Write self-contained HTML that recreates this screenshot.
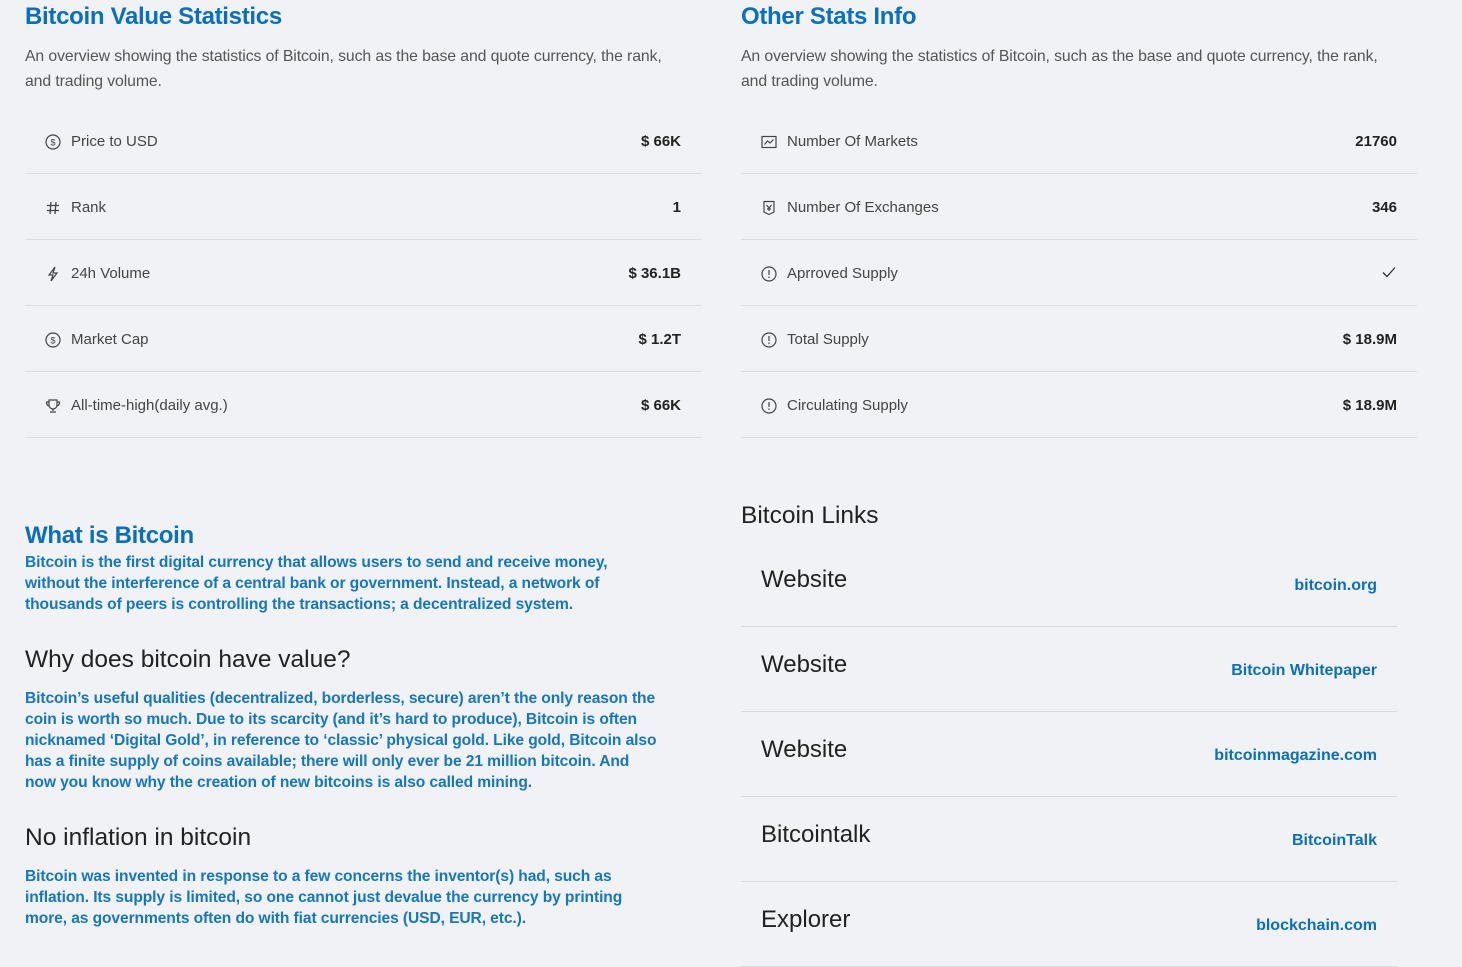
<!DOCTYPE html>
<html><head><meta charset="utf-8"><style>
*{margin:0;padding:0;box-sizing:border-box}
body{width:1462px;height:935px;overflow:hidden;background:#f0f2f5;font-family:"Liberation Sans",sans-serif;color:#333;position:relative}
.abs{position:absolute;white-space:nowrap}
h2{font-size:24px;font-weight:bold;color:#0a6fc2;letter-spacing:-0.3px}
.desc{font-size:15.8px;line-height:25px;color:#555;letter-spacing:-0.1px}
.stats{position:absolute;width:676px}
.row{height:66px;border-bottom:1px solid #dcdde0;display:flex;align-items:center;padding:0 20px;font-size:15px;color:#444;padding-top:2px}
.row svg{width:16px;height:16px;margin-right:10px;flex:none}
.row .v{margin-left:auto;font-weight:bold;color:#222;font-size:15px}
.bp{font-size:15.6px;font-weight:bold;color:#1476c4;line-height:21px;white-space:nowrap;letter-spacing:-0.1px}
.h3{font-size:24.5px;color:#222}
.links{position:absolute;left:741px;top:542px;width:656px}
.lrow{height:85px;border-bottom:1px solid #d9d9d9;position:relative}
.lrow .n{position:absolute;left:20px;top:24px;font-size:24px;color:#222}
.lrow .u{position:absolute;right:20px;top:35px;font-size:16px;font-weight:bold;color:#0a6fc2}
</style></head><body>
<h2 class="abs" style="left:25px;top:3px">Bitcoin Value Statistics</h2>
<div class="abs desc" style="left:25px;top:44px">An overview showing the statistics of Bitcoin, such as the base and quote currency, the rank,<br>and trading volume.</div>
<h2 class="abs" style="left:741px;top:3px">Other Stats Info</h2>
<div class="abs desc" style="left:741px;top:44px">An overview showing the statistics of Bitcoin, such as the base and quote currency, the rank,<br>and trading volume.</div>

<div class="stats" style="left:25px;top:108px">
<div class="row"><svg viewBox="0 0 16 16" fill="none" stroke="#444" stroke-width="1.2"><circle cx="8" cy="8" r="7"/><text x="8" y="11.5" font-size="9" text-anchor="middle" fill="#444" stroke="none">$</text></svg>Price to USD<span class="v">$ 66K</span></div>
<div class="row"><svg viewBox="0 0 16 16" fill="none" stroke="#444" stroke-width="1.3"><path d="M6 2L5 14M11 2L10 14M2 5.5H14M2 10.5H14"/></svg>Rank<span class="v">1</span></div>
<div class="row"><svg viewBox="0 0 16 16" fill="none" stroke="#444" stroke-width="1.2"><path d="M10 1L4 9H8L6 15L12 7H8Z"/></svg>24h Volume<span class="v">$ 36.1B</span></div>
<div class="row"><svg viewBox="0 0 16 16" fill="none" stroke="#444" stroke-width="1.2"><circle cx="8" cy="8" r="7"/><text x="8" y="11.5" font-size="9" text-anchor="middle" fill="#444" stroke="none">$</text></svg>Market Cap<span class="v">$ 1.2T</span></div>
<div class="row"><svg viewBox="0 0 16 16" fill="none" stroke="#444" stroke-width="1.2"><path d="M4 2H12V7A4 4 0 0 1 4 7Z M4 4H1.5C1.5 7 3 8 4.5 8 M12 4H14.5C14.5 7 13 8 11.5 8 M8 11V13 M5 14H11"/></svg>All-time-high(daily avg.)<span class="v">$ 66K</span></div>
</div>

<div class="stats" style="left:741px;top:108px">
<div class="row"><svg viewBox="0 0 16 16" fill="none" stroke="#444" stroke-width="1.2"><rect x="1" y="2.5" width="14" height="11"/><path d="M3.5 10.5L6.5 7L9 9L12.5 5.5"/></svg>Number Of Markets<span class="v">21760</span></div>
<div class="row"><svg viewBox="0 0 16 16" fill="none" stroke="#444" stroke-width="1.2"><path d="M3 1.5H13V12L8 14.5L3 12Z M5.5 5L8 8L10.5 5 M8 8V11 M6 9H10"/></svg>Number Of Exchanges<span class="v">346</span></div>
<div class="row"><svg viewBox="0 0 16 16" fill="none" stroke="#444" stroke-width="1.2"><circle cx="8" cy="8" r="7"/><path d="M8 4V9 M8 10.5V12"/></svg>Aprroved Supply<span class="v"><svg viewBox="0 0 16 16" style="margin:0" fill="none" stroke="#333" stroke-width="1.3"><path d="M2 8.5L6 12.5L14 3.5"/></svg></span></div>
<div class="row"><svg viewBox="0 0 16 16" fill="none" stroke="#444" stroke-width="1.2"><circle cx="8" cy="8" r="7"/><path d="M8 4V9 M8 10.5V12"/></svg>Total Supply<span class="v">$ 18.9M</span></div>
<div class="row"><svg viewBox="0 0 16 16" fill="none" stroke="#444" stroke-width="1.2"><circle cx="8" cy="8" r="7"/><path d="M8 4V9 M8 10.5V12"/></svg>Circulating Supply<span class="v">$ 18.9M</span></div>
</div>

<h2 class="abs" style="left:25px;top:522px">What is Bitcoin</h2>
<div class="abs bp" style="left:25px;top:552px">Bitcoin is the first digital currency that allows users to send and receive money,<br>without the interference of a central bank or government. Instead, a network of<br>thousands of peers is controlling the transactions; a decentralized system.</div>
<div class="abs h3" style="left:25px;top:646px">Why does bitcoin have value?</div>
<div class="abs bp" style="left:25px;top:688px">Bitcoin’s useful qualities (decentralized, borderless, secure) aren’t the only reason the<br>coin is worth so much. Due to its scarcity (and it’s hard to produce), Bitcoin is often<br>nicknamed ‘Digital Gold’, in reference to ‘classic’ physical gold. Like gold, Bitcoin also<br>has a finite supply of coins available; there will only ever be 21 million bitcoin. And<br>now you know why the creation of new bitcoins is also called mining.</div>
<div class="abs h3" style="left:25px;top:824px">No inflation in bitcoin</div>
<div class="abs bp" style="left:25px;top:866px">Bitcoin was invented in response to a few concerns the inventor(s) had, such as<br>inflation. Its supply is limited, so one cannot just devalue the currency by printing<br>more, as governments often do with fiat currencies (USD, EUR, etc.).</div>

<div class="abs h3" style="left:741px;top:502px">Bitcoin Links</div>
<div class="links">
<div class="lrow"><span class="n">Website</span><span class="u">bitcoin.org</span></div>
<div class="lrow"><span class="n">Website</span><span class="u">Bitcoin Whitepaper</span></div>
<div class="lrow"><span class="n">Website</span><span class="u">bitcoinmagazine.com</span></div>
<div class="lrow"><span class="n">Bitcointalk</span><span class="u">BitcoinTalk</span></div>
<div class="lrow"><span class="n">Explorer</span><span class="u">blockchain.com</span></div>
</div>
</body></html>
